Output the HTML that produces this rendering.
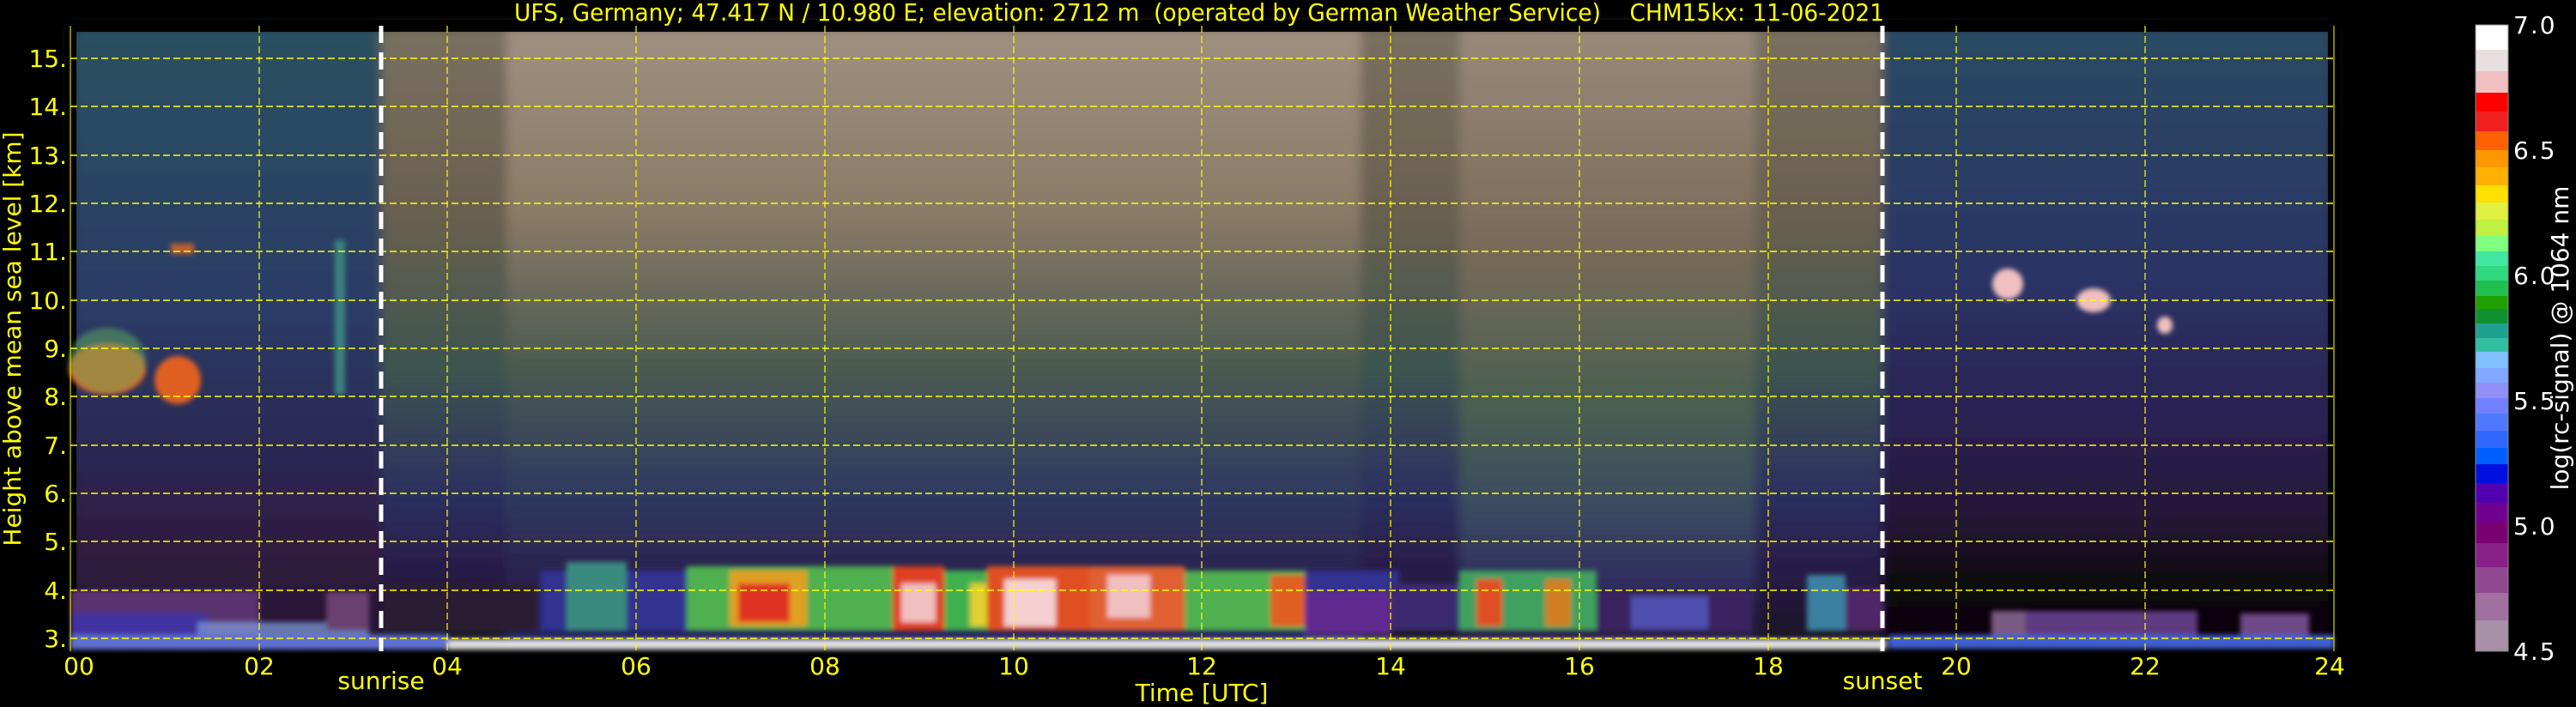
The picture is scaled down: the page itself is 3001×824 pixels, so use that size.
<!DOCTYPE html>
<html><head><meta charset="utf-8"><style>
html,body{margin:0;padding:0;background:#000;width:3001px;height:824px;overflow:hidden}
svg{display:block}
text{font-family:"DejaVu Sans","Liberation Sans",sans-serif}
</style></head><body>
<svg width="3001" height="824" viewBox="0 0 3001 824" xmlns="http://www.w3.org/2000/svg">
<defs>
<linearGradient id="gA" x1="0" y1="0" x2="0" y2="1">
<stop offset="0" stop-color="#2c5060"/><stop offset="0.45" stop-color="#2a3c66"/><stop offset="0.72" stop-color="#2c2450"/><stop offset="0.84" stop-color="#301c40"/><stop offset="1" stop-color="#251530"/></linearGradient>
<linearGradient id="gB" x1="0" y1="0" x2="0" y2="1">
<stop offset="0" stop-color="#7a7060"/><stop offset="0.3" stop-color="#6a6050"/><stop offset="0.55" stop-color="#3c5450"/><stop offset="0.75" stop-color="#2c3060"/><stop offset="0.87" stop-color="#281c48"/><stop offset="1" stop-color="#181020"/></linearGradient>
<linearGradient id="gC" x1="0" y1="0" x2="0" y2="1">
<stop offset="0" stop-color="#a09080"/><stop offset="0.3" stop-color="#8a7a66"/><stop offset="0.55" stop-color="#4a5a50"/><stop offset="0.75" stop-color="#2e3a60"/><stop offset="0.87" stop-color="#2c2450"/><stop offset="1" stop-color="#202060"/></linearGradient>
<linearGradient id="gD" x1="0" y1="0" x2="0" y2="1">
<stop offset="0" stop-color="#9a8a7a"/><stop offset="0.35" stop-color="#7a6a5a"/><stop offset="0.6" stop-color="#4a6050"/><stop offset="0.78" stop-color="#3a4a60"/><stop offset="0.88" stop-color="#303060"/><stop offset="1" stop-color="#281a40"/></linearGradient>
<linearGradient id="gE" x1="0" y1="0" x2="0" y2="1">
<stop offset="0" stop-color="#2a4a62"/><stop offset="0.4" stop-color="#2a3466"/><stop offset="0.65" stop-color="#2a2050"/><stop offset="0.8" stop-color="#241634"/><stop offset="0.88" stop-color="#100810"/><stop offset="1" stop-color="#080408"/></linearGradient>
<filter id="bl"><feGaussianBlur stdDeviation="6"/></filter>
<filter id="bl2"><feGaussianBlur stdDeviation="3"/></filter>
</defs>
<rect width="3001" height="824" fill="#000"/>
<g filter="url(#bl)">
<rect x="82" y="30" width="365" height="729" fill="url(#gA)"/>
<rect x="444" y="30" width="150" height="729" fill="url(#gB)"/>
<rect x="590" y="30" width="1000" height="729" fill="url(#gC)"/>
<rect x="1585" y="30" width="120" height="729" fill="url(#gB)"/>
<rect x="1700" y="30" width="350" height="729" fill="url(#gD)"/>
<rect x="2045" y="30" width="150" height="729" fill="url(#gB)"/>
<rect x="2193" y="30" width="526" height="729" fill="url(#gE)"/>
</g>
<rect x="82" y="30" width="2637" height="729" fill="none" stroke="#000" stroke-width="14"/>
<g filter="url(#bl2)">
<rect x="82" y="688" width="220" height="56" fill="#5a3070"/>
<rect x="82" y="715" width="160" height="30" fill="#4030a0"/>
<rect x="230" y="725" width="200" height="20" fill="#80a0e0" opacity="0.7"/>
<rect x="380" y="690" width="50" height="45" fill="#6a4070"/>
<rect x="447" y="680" width="180" height="55" fill="#2a1a30"/>
<rect x="630" y="665" width="1000" height="70" fill="#303090"/>
<rect x="660" y="655" width="70" height="80" fill="#3a8a80"/>
<rect x="800" y="660" width="240" height="75" fill="#50b050"/>
<rect x="850" y="665" width="90" height="65" fill="#e0a020"/>
<rect x="860" y="680" width="60" height="45" fill="#e03020"/>
<rect x="1040" y="660" width="60" height="75" fill="#e04020"/>
<rect x="1050" y="680" width="40" height="45" fill="#f0c0c0"/>
<rect x="1100" y="665" width="110" height="70" fill="#40b050"/>
<rect x="1130" y="680" width="40" height="50" fill="#e0d030"/>
<rect x="1150" y="660" width="120" height="75" fill="#e05020"/>
<rect x="1170" y="675" width="60" height="55" fill="#f4d0d0"/>
<rect x="1270" y="660" width="110" height="75" fill="#e06030"/>
<rect x="1290" y="670" width="50" height="50" fill="#f0c0c0"/>
<rect x="1380" y="665" width="140" height="70" fill="#50b050"/>
<rect x="1480" y="670" width="40" height="60" fill="#e06020"/>
<rect x="1520" y="690" width="100" height="50" fill="#602a90"/>
<rect x="1620" y="680" width="200" height="55" fill="#3a2a70"/>
<rect x="1700" y="665" width="160" height="70" fill="#40a060"/>
<rect x="1720" y="675" width="30" height="55" fill="#e05020"/>
<rect x="1800" y="675" width="30" height="55" fill="#d08020"/>
<rect x="1860" y="690" width="180" height="45" fill="#3a2060"/>
<rect x="1900" y="695" width="90" height="38" fill="#5050b0"/>
<rect x="2105" y="670" width="45" height="65" fill="#3a80a0"/>
<rect x="2150" y="685" width="45" height="50" fill="#502868"/>
<rect x="2320" y="712" width="40" height="30" fill="#7a5a80"/>
<rect x="2360" y="712" width="200" height="32" fill="#603a80"/>
<rect x="2610" y="715" width="80" height="28" fill="#704a88"/>
<rect x="2200" y="740" width="519" height="16" fill="#4060d0"/>
<rect x="447" y="745" width="1750" height="12" fill="#e0e0e0"/>
<rect x="82" y="740" width="440" height="17" fill="#6070d0"/>
</g>
<g filter="url(#bl2)">
<ellipse cx="125" cy="430" rx="45" ry="30" fill="#e06020"/>
<ellipse cx="207" cy="443" rx="27" ry="28" fill="#e06020"/>
<ellipse cx="125" cy="420" rx="45" ry="38" fill="#60b060" opacity="0.5"/>
<rect x="199" y="284" width="27" height="12" fill="#c06030"/>
<rect x="390" y="280" width="12" height="180" fill="#3a8080"/>
<ellipse cx="2339" cy="331" rx="18" ry="18" fill="#f0c0c0"/>
<ellipse cx="2439" cy="350" rx="20" ry="14" fill="#f0c0c0"/>
<ellipse cx="2522" cy="379" rx="9" ry="10" fill="#f0c0c0"/>
</g>
<g stroke="#ffff00" stroke-width="1.6" stroke-dasharray="8,4" fill="none">
<line x1="82" y1="744" x2="2719" y2="744"/><line x1="82" y1="688" x2="2719" y2="688"/>
<line x1="82" y1="631" x2="2719" y2="631"/><line x1="82" y1="575" x2="2719" y2="575"/>
<line x1="82" y1="519" x2="2719" y2="519"/><line x1="82" y1="462" x2="2719" y2="462"/>
<line x1="82" y1="406" x2="2719" y2="406"/><line x1="82" y1="350" x2="2719" y2="350"/>
<line x1="82" y1="293" x2="2719" y2="293"/><line x1="82" y1="237" x2="2719" y2="237"/>
<line x1="82" y1="181" x2="2719" y2="181"/><line x1="82" y1="124" x2="2719" y2="124"/>
<line x1="82" y1="68" x2="2719" y2="68"/>
</g>
<g stroke="#ffff00" stroke-width="1.2" stroke-dasharray="8,4" fill="none">
<line x1="302" y1="30" x2="302" y2="759"/><line x1="521" y1="30" x2="521" y2="759"/>
<line x1="741" y1="30" x2="741" y2="759"/><line x1="961" y1="30" x2="961" y2="759"/>
<line x1="1181" y1="30" x2="1181" y2="759"/><line x1="1400" y1="30" x2="1400" y2="759"/>
<line x1="1620" y1="30" x2="1620" y2="759"/><line x1="1840" y1="30" x2="1840" y2="759"/>
<line x1="2060" y1="30" x2="2060" y2="759"/><line x1="2279" y1="30" x2="2279" y2="759"/>
<line x1="2499" y1="30" x2="2499" y2="759"/>
</g>
<line x1="82" y1="30" x2="82" y2="759" stroke="#ffff00" stroke-width="1"/>
<line x1="2719" y1="30" x2="2719" y2="759" stroke="#ffff00" stroke-width="1"/>
<g stroke="#fff" stroke-width="5" stroke-dasharray="20,11">
<line x1="444" y1="30" x2="444" y2="759"/><line x1="2193" y1="30" x2="2193" y2="759"/>
</g>
<text x="1397" y="24" fill="#ffff00" font-size="28" text-anchor="middle" textLength="1596" lengthAdjust="spacingAndGlyphs" xml:space="preserve">UFS, Germany; 47.417 N / 10.980 E; elevation: 2712 m  (operated by German Weather Service)    CHM15kx: 11-06-2021</text>
<g fill="#ffff00" font-size="28" text-anchor="end">
<text x="78" y="754">3.</text><text x="78" y="698">4.</text><text x="78" y="641">5.</text>
<text x="78" y="585">6.</text><text x="78" y="529">7.</text><text x="78" y="472">8.</text>
<text x="78" y="416">9.</text><text x="78" y="360">10.</text><text x="78" y="303">11.</text>
<text x="78" y="247">12.</text><text x="78" y="191">13.</text><text x="78" y="134">14.</text>
<text x="78" y="78">15.</text>
</g>
<g fill="#ffff00" font-size="28" text-anchor="middle">
<text x="92" y="786">00</text><text x="302" y="786">02</text><text x="521" y="786">04</text>
<text x="741" y="786">06</text><text x="961" y="786">08</text><text x="1181" y="786">10</text>
<text x="1400" y="786">12</text><text x="1620" y="786">14</text><text x="1840" y="786">16</text>
<text x="2060" y="786">18</text><text x="2279" y="786">20</text><text x="2499" y="786">22</text>
<text x="2714" y="786">24</text>
<text x="444" y="803">sunrise</text><text x="2193" y="803">sunset</text>
<text x="1400" y="817">Time [UTC]</text>
</g>
<text transform="translate(24,395) rotate(-90)" fill="#ffff00" font-size="28" text-anchor="middle">Height above mean sea level [km]</text>
<g>
<rect x="2884" y="29" width="38" height="29" fill="#ffffff"/>
<rect x="2884" y="58" width="38" height="25" fill="#e8e0e0"/>
<rect x="2884" y="83" width="38" height="25" fill="#f0c0c0"/>
<rect x="2884" y="108" width="38" height="22" fill="#ff0000"/>
<rect x="2884" y="130" width="38" height="23" fill="#f02020"/>
<rect x="2884" y="153" width="38" height="22" fill="#ff6000"/>
<rect x="2884" y="175" width="38" height="20" fill="#ff9800"/>
<rect x="2884" y="195" width="38" height="21" fill="#ffb000"/>
<rect x="2884" y="216" width="38" height="20" fill="#ffe000"/>
<rect x="2884" y="236" width="38" height="20" fill="#e0f040"/>
<rect x="2884" y="256" width="38" height="19" fill="#c0f040"/>
<rect x="2884" y="275" width="38" height="18" fill="#80ff80"/>
<rect x="2884" y="293" width="38" height="17" fill="#40e8a0"/>
<rect x="2884" y="310" width="38" height="17" fill="#30d880"/>
<rect x="2884" y="327" width="38" height="18" fill="#20c050"/>
<rect x="2884" y="345" width="38" height="15" fill="#20a000"/>
<rect x="2884" y="360" width="38" height="17" fill="#109030"/>
<rect x="2884" y="377" width="38" height="17" fill="#20a090"/>
<rect x="2884" y="394" width="38" height="16" fill="#30c0a0"/>
<rect x="2884" y="410" width="38" height="19" fill="#80c0ff"/>
<rect x="2884" y="429" width="38" height="17" fill="#80a8ff"/>
<rect x="2884" y="446" width="38" height="18" fill="#9090f8"/>
<rect x="2884" y="464" width="38" height="18" fill="#7080ff"/>
<rect x="2884" y="482" width="38" height="20" fill="#5078ff"/>
<rect x="2884" y="502" width="38" height="20" fill="#3068ff"/>
<rect x="2884" y="522" width="38" height="19" fill="#0060ff"/>
<rect x="2884" y="541" width="38" height="22" fill="#0010e0"/>
<rect x="2884" y="563" width="38" height="23" fill="#5000b0"/>
<rect x="2884" y="586" width="38" height="23" fill="#700090"/>
<rect x="2884" y="609" width="38" height="24" fill="#780070"/>
<rect x="2884" y="633" width="38" height="28" fill="#882088"/>
<rect x="2884" y="661" width="38" height="30" fill="#904890"/>
<rect x="2884" y="691" width="38" height="32" fill="#a070a0"/>
<rect x="2884" y="723" width="38" height="36" fill="#a890a8"/>
<rect x="2884" y="29" width="38" height="730" fill="none" stroke="#888" stroke-width="1"/>
</g>
<g fill="#fff" font-size="28" letter-spacing="2">
<text x="2928" y="39">7.0</text><text x="2928" y="185">6.5</text><text x="2928" y="331">6.0</text>
<text x="2928" y="477">5.5</text><text x="2928" y="623">5.0</text><text x="2928" y="769">4.5</text>
</g>
<text transform="translate(2992,394) rotate(-90)" fill="#fff" font-size="28" text-anchor="middle">log(rc-signal) @ 1064 nm</text>
</svg>
</body></html>
